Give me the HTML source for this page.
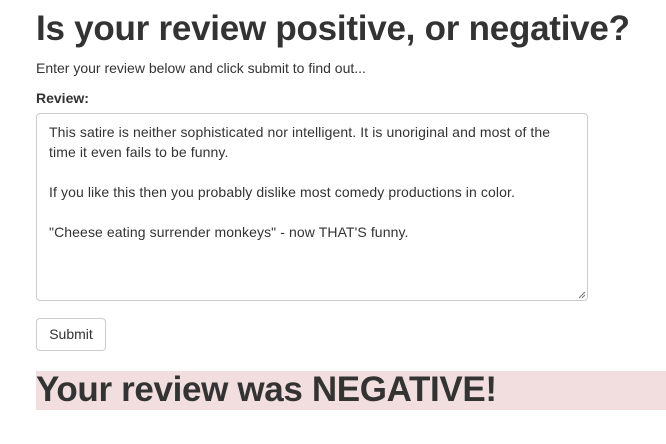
<!DOCTYPE html>
<html><head><style>
body{margin:0;background:#fff;font-family:"Liberation Sans",Arial,sans-serif;color:#333;width:666px;height:444px;overflow:hidden;position:relative}
h1{position:absolute;left:36px;top:9px;margin:0;font-size:35px;font-weight:bold;line-height:40px;letter-spacing:-0.25px}
.sub{position:absolute;left:36px;top:60px;font-size:14px}
.lab{position:absolute;left:36px;top:90px;font-size:14px;font-weight:bold}
.ta{position:absolute;left:36px;top:113px;width:550px;height:186px;border:1px solid #ccc;border-radius:4px;box-sizing:content-box}
.ta div{position:absolute;left:12px;top:8px;width:505px;font-size:14px;line-height:20px;letter-spacing:0.1px}
.btn{position:absolute;left:36px;top:318px;width:68px;height:31px;border:1px solid #ccc;border-radius:4px;font-size:14px;text-align:center;line-height:31px}
.neg{position:absolute;left:36px;top:371px;width:630px;height:39px;background:#f2dede}
.neg span{position:absolute;left:0;top:-1px;font-size:35px;font-weight:bold;line-height:40px;letter-spacing:-0.35px}
</style></head><body>
<h1>Is your review positive, or negative?</h1>
<div class="sub">Enter your review below and click submit to find out...</div>
<div class="lab">Review:</div>
<div class="ta"><div>This satire is neither sophisticated nor intelligent. It is unoriginal and most of the time it even fails to be funny.<br><br>If you like this then you probably dislike most comedy productions in color.<br><br>"Cheese eating surrender monkeys" - now THAT'S funny.</div>
<svg style="position:absolute;right:1px;bottom:1px" width="8" height="8"><path d="M7 1L1 7M7 4L4 7" stroke="#777" stroke-width="1"/></svg></div>
<div class="btn">Submit</div>
<div class="neg"><span>Your review was NEGATIVE!</span></div>
</body></html>
